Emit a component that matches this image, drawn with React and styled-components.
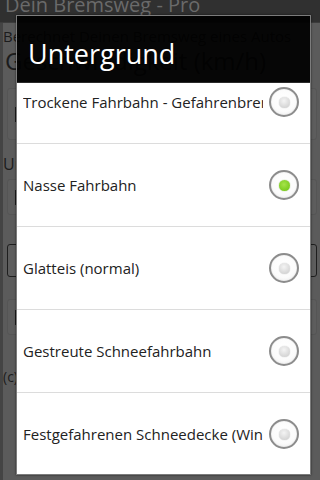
import React from "react";
import styled, { createGlobalStyle } from "styled-components";

const Global = createGlobalStyle`
  html, body { margin: 0; padding: 0; background: #2e2e2e; }
  * { box-sizing: border-box; }
`;

const Screen = styled.div`
  position: relative;
  width: 320px;
  height: 480px;
  overflow: hidden;
  background: #5b5b5b;
  font-family: "Open Sans", "Noto Sans", "DejaVu Sans", sans-serif;
`;

const AppTitleBar = styled.div`
  height: 23px;
  background: #303030;
  color: #6a6a6a;
  font-size: 20px;
  line-height: 10px;
  padding-left: 5px;
  border-bottom: 1px solid #3c3c3c;
  white-space: nowrap;
  overflow: hidden;
`;

const AppBody = styled.div`
  display: flex;
  flex-direction: column;
  padding: 3px 3px 0 0;
  color: #1c1c1c;
  border-left: 3px solid #444444;
  height: 457px;
`;

const Intro = styled.div`
  font-size: 15px;
  line-height: 20px;
  white-space: nowrap;
`;

const Heading = styled.div`
  font-size: 24px;
  line-height: 30px;
  white-space: nowrap;
  margin-left: 2px;
`;

const Label = styled.div`
  font-size: 16px;
  margin-top: ${(p) => p.$mt}px;
  line-height: 20px;
  white-space: nowrap;
`;

const Field = styled.div`
  flex: none;
  height: ${(p) => p.$h}px;
  margin-top: ${(p) => p.$mt}px;
  margin-left: 4px;
  border: 1px solid ${(p) => (p.$outlined ? "#1e1e1e" : "#555555")};
  background: #5d5d5d;
  border-radius: 3px;
  display: flex;
  align-items: center;
  padding-left: 7px;
`;

const Cursor = styled.span`
  width: 2px;
  height: 15px;
  background: #1c1c1c;
`;

const Footer = styled.div`
  font-size: 14px;
  line-height: 19px;
  margin-top: ${(p) => p.$mt}px;
  white-space: nowrap;
`;

const Dialog = styled.div`
  position: absolute;
  left: 16px;
  top: 15px;
  width: 295px;
  height: 460px;
  display: flex;
  flex-direction: column;
  border: 1px solid #7c7c7c;
  box-shadow: 0 0 2px rgba(0, 0, 0, 0.6);
  overflow: hidden;
`;

const DialogTitle = styled.div`
  height: 67px;
  flex: none;
  background: rgba(0, 0, 0, 0.93);
  color: #ffffff;
  font-size: 27px;
  padding-left: 11px;
  padding-top: 8px;
  display: flex;
  align-items: center;
  border-bottom: 1px solid #2a2a2a;
  white-space: nowrap;
`;

const List = styled.div`
  flex: 1;
  background: #ffffff;
  overflow: hidden;
`;

const Scroller = styled.div`
  margin-top: -22px;
  display: flex;
  flex-direction: column;
`;

const Row = styled.div`
  height: 83px;
  flex: none;
  display: flex;
  align-items: center;
  padding: 0 11px 0 6px;
  border-bottom: 1px solid #dcdcdc;
`;

const RowText = styled.div`
  flex: 1;
  min-width: 0;
  overflow: hidden;
  white-space: nowrap;
  font-size: 15px;
  color: #222222;
  margin-right: 6px;
`;

const Radio = styled.div`
  width: 30px;
  height: 30px;
  flex: none;
  border-radius: 50%;
  border: 2px solid #8c8c8c;
  background: radial-gradient(circle at 50% 40%, #ffffff 0%, #fbfbfb 60%, #e6e6e6 100%);
  display: flex;
  align-items: center;
  justify-content: center;
  box-shadow: inset 0 0 1px #bbbbbb;
`;

const Dot = styled.div`
  width: 11px;
  height: 11px;
  border-radius: 50%;
  background: ${(p) =>
    p.$checked
      ? "radial-gradient(circle at 45% 40%, #a6e34a 0%, #7ccc1f 70%, #6bb318 100%)"
      : "radial-gradient(circle at 45% 35%, #f4f4f4 0%, #d6d6d6 70%, #c4c4c4 100%)"};
  box-shadow: ${(p) => (p.$checked ? "0 0 1px #5f9e16" : "0 0 1px #b0b0b0")};
`;

const options = [
  "Trockene Fahrbahn - Gefahrenbremsung",
  "Nasse Fahrbahn",
  "Glatteis (normal)",
  "Gestreute Schneefahrbahn",
  "Festgefahrenen Schneedecke (Winterreifen)",
];

export default function App() {
  return (
    <>
      <Global />
      <Screen>
        <AppTitleBar>Dein Bremsweg - Pro</AppTitleBar>
        <AppBody>
          <Intro>Berechnet Deinen Bremsweg eines Autos</Intro>
          <Heading>Geschwindigkeit (km/h)</Heading>
          <Field $h={52} $mt={12}>
            <Cursor />
          </Field>
          <Label $mt={14}>Untergrund</Label>
          <Field $h={36} $mt={5}>
            <Cursor />
          </Field>
          <Field $h={33} $mt={29} $outlined />
          <Field $h={36} $mt={22}>
            <Cursor />
          </Field>
          <Footer $mt={32}>(c) Dein Bremsweg</Footer>
        </AppBody>
        <Dialog>
          <DialogTitle>Untergrund</DialogTitle>
          <List>
            <Scroller>
              {options.map((o, i) => (
                <Row key={o}>
                  <RowText>{o}</RowText>
                  <Radio>
                    <Dot $checked={i === 1} />
                  </Radio>
                </Row>
              ))}
            </Scroller>
          </List>
        </Dialog>
      </Screen>
    </>
  );
}
